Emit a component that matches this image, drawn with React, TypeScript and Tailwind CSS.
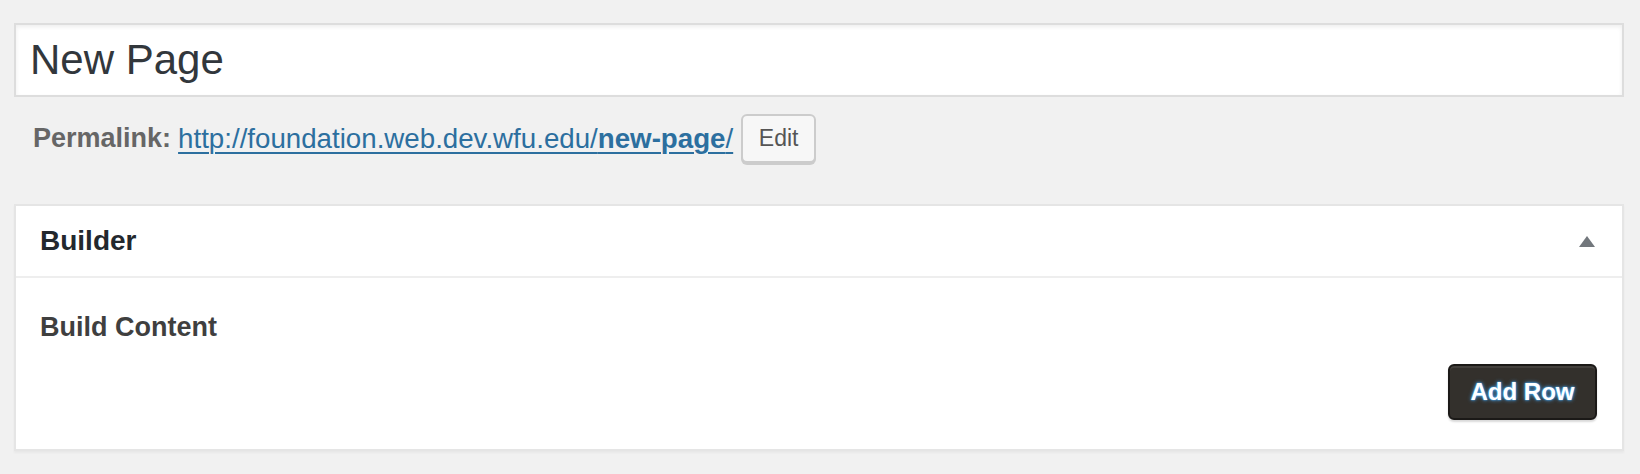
export default function App() {
  return (
    <div className="min-h-[474px] bg-[#f1f1f1] pl-[14px] pr-[16px] pt-[23px] font-['Liberation_Sans',Arial,sans-serif]">
      <div className="flex h-[74px] items-center border-2 border-[#dddddd] bg-white pl-[14px] shadow-[inset_0_2px_4px_rgba(0,0,0,0.07)]">
        <span className="text-[42px] leading-none text-[#32373c]">New Page</span>
      </div>

      <div className="mt-[17px] flex items-center pl-[19px]">
        <span className="text-[27px] font-bold text-[#666666]">Permalink:</span>
        <a
          href="#"
          className="ml-[7px] text-[27.7px] text-[#2c6f9f] underline decoration-[2px] underline-offset-[4px]"
        >
          http://foundation.web.dev.wfu.edu/<span className="font-bold">new-page</span>/
        </a>
        <button className="ml-[8px] flex h-[49px] w-[75px] items-center justify-center rounded-[6px] border-2 border-[#cccccc] bg-[#f7f7f7] text-[23px] text-[#555555] shadow-[0_2px_0_#cccccc]">
          Edit
        </button>
      </div>

      <section className="mt-[41px] border-2 border-[#e5e5e5] bg-white shadow-[0_2px_2px_rgba(0,0,0,0.04)]">
        <div className="flex h-[72px] items-center justify-between border-b-2 border-[#eeeeee] pl-[24px] pr-[27px]">
          <h2 className="text-[28px] font-bold text-[#23282d]">Builder</h2>
          <svg width="16" height="11" viewBox="0 0 16 11" className="mt-[1px]">
            <polygon points="8,0 16,11 0,11" fill="#72777c" />
          </svg>
        </div>

        <div className="pl-[24px] pr-[25px] pt-[33px] pb-[29px]">
          <h3 className="text-[27px] font-bold leading-[32px] text-[#3f3f3f]">Build Content</h3>
          <div className="mt-[21px] flex justify-end">
            <button className="flex h-[56px] w-[149px] items-center justify-center rounded-[6px] border-2 border-[#1b1917] bg-[#33302c] text-[24px] font-bold text-white shadow-[inset_0_2px_0_rgba(255,255,255,0.08),0_2px_2px_rgba(0,0,0,0.15)] [text-shadow:0_0_4px_#47a6f0,0_0_2px_#47a6f0,0_0_1px_#47a6f0]">
              Add Row
            </button>
          </div>
        </div>
      </section>
    </div>
  );
}
